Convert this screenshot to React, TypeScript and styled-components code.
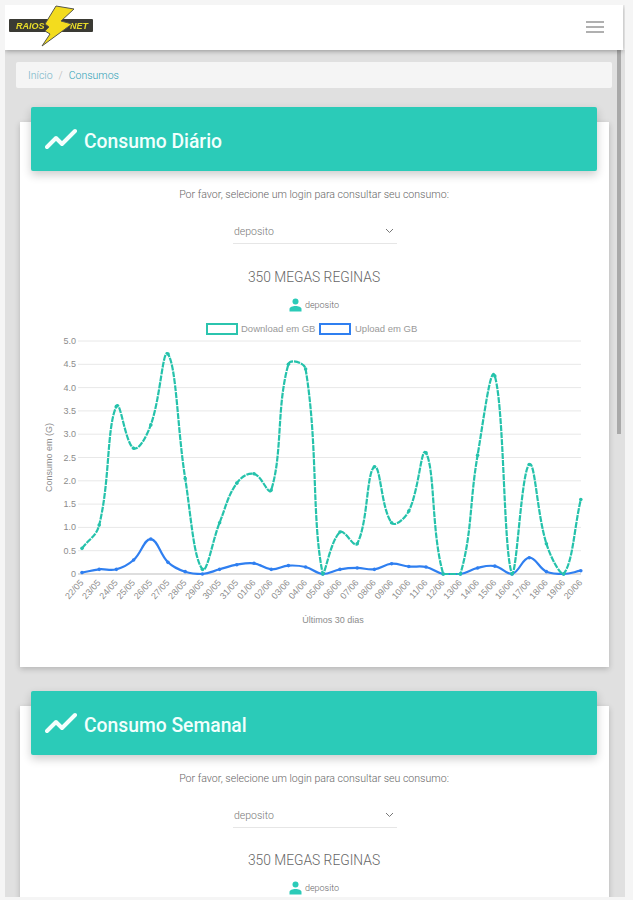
import styled, { createGlobalStyle } from "styled-components";

const GlobalStyle = createGlobalStyle`
  html, body {
    margin: 0;
    padding: 0;
    background: #f5f5f5;
    font-family: Roboto, "Liberation Sans", sans-serif;
  }
`;

const Frame = styled.div`
  position: relative;
  width: 620px;
  height: 892px;
  margin: 5px 0 0 5px;
  overflow: hidden;
  display: flex;
  flex-direction: column;
  filter: blur(0.7px);
`;

const Navbar = styled.header`
  position: relative;
  z-index: 2;
  flex: none;
  height: 45px;
  margin-right: 2px;
  background: #fff;
  box-shadow: 0 1px 5px rgba(0, 0, 0, 0.35);
  display: flex;
  align-items: center;
  justify-content: space-between;
  padding-right: 19px;
`;

const LogoLink = styled.a`
  display: flex;
  margin-top: -3px;
`;

const Burger = styled.div`
  width: 18px;
  display: flex;
  flex-direction: column;
  gap: 3px;
  margin-top: -1px;

  span {
    height: 2px;
    background: #b0b0b0;
  }
`;

const Scrollbar = styled.div`
  position: absolute;
  z-index: 1;
  right: 4px;
  top: 45px;
  width: 4px;
  height: 384px;
  background: #a9a9a9;
`;

const Main = styled.main`
  flex: 1;
  min-height: 0;
  padding: 12px 13px 0 11px;
  background: #e0e0e0;
  display: flex;
  flex-direction: column;
`;

const Breadcrumb = styled.nav`
  flex: none;
  height: 26px;
  border-radius: 2px;
  background: #f5f5f5;
  display: flex;
  align-items: center;
  gap: 6px;
  padding-left: 12px;
  font-size: 10.5px;
  font-weight: 300;
  color: #b5b5b5;
`;

const Crumb = styled.a<{ $active?: boolean }>`
  color: ${(p) => (p.$active ? "#2b9fb5" : "#6fb3c6")};
`;

const Card = styled.section<{ $first?: boolean }>`
  flex: none;
  margin: ${(p) => (p.$first ? "34px 3px 0 4px" : "39px 3px 0 4px")};
  height: ${(p) => (p.$first ? "545px" : "400px")};
  padding: 0 12px 0 11px;
  background: #fff;
  box-shadow: 0 2px 6px rgba(0, 0, 0, 0.2);
  display: flex;
  flex-direction: column;
  align-items: stretch;
`;

const CardHeader = styled.div`
  flex: none;
  height: 64px;
  margin-top: -15px;
  padding-left: 14px;
  border-radius: 2px;
  background: #2bcbb8;
  box-shadow: 0 4px 10px rgba(0, 0, 0, 0.2);
  display: flex;
  align-items: center;
  gap: 7px;
`;

const CardTitle = styled.h2`
  margin: 4px 0 0;
  font-size: 19.3px;
  font-weight: 500;
  color: #f2fffd;
`;

const Hint = styled.p`
  margin: 17px 0 0;
  height: 14px;
  line-height: 14px;
  text-align: center;
  font-size: 10.6px;
  font-weight: 300;
  color: #666;
`;

const SelectRow = styled.div`
  align-self: center;
  width: 164px;
  height: 25px;
  margin: 17px 0 0 2px;
  box-sizing: border-box;
  border-bottom: 1px solid #e6e6e6;
  padding: 0 3px 0 1px;
  display: flex;
  align-items: center;
  justify-content: space-between;
  font-size: 10.5px;
  font-weight: 300;
  color: #777;
`;

const PlanName = styled.h4<{ $first?: boolean }>`
  margin: ${(p) => (p.$first ? "25px" : "24px")} 0 0;
  height: 17px;
  line-height: 17px;
  text-align: center;
  font-size: 13.8px;
  font-weight: 300;
  color: #666;
`;

const LoginRow = styled.div`
  margin-top: 11px;
  height: 16px;
  display: flex;
  align-items: center;
  justify-content: center;
  gap: 3px;
  font-size: 9px;
  font-weight: 300;
  color: #666;
`;

const ChartArea = styled.svg`
  display: block;
  flex: none;
  margin: 10px -12px 0 -11px;
  width: 589px;
  height: 324px;
`;

const TickText = styled.text`
  font-family: "Liberation Sans", sans-serif;
  font-size: 9px;
  fill: #8c8c8c;
`;

const LegendText = styled.text`
  font-family: "Liberation Sans", sans-serif;
  font-size: 9.5px;
  fill: #999;
`;

const days = [
  "22/05", "23/05", "24/05", "25/05", "26/05", "27/05", "28/05", "29/05", "30/05", "31/05",
  "01/06", "02/06", "03/06", "04/06", "05/06", "06/06", "07/06", "08/06", "09/06", "10/06",
  "11/06", "12/06", "13/06", "14/06", "15/06", "16/06", "17/06", "18/06", "19/06", "20/06",
];

const download = [
  0.55, 1.05, 3.6, 2.7, 3.2, 4.72, 2.05, 0.1, 1.1, 1.95,
  2.15, 1.8, 4.5, 4.4, 0, 0.9, 0.65, 2.3, 1.1, 1.35,
  2.6, 0, 0, 2.55, 4.25, 0, 2.35, 0.65, 0, 1.6,
];

const upload = [
  0.03, 0.1, 0.1, 0.3, 0.75, 0.25, 0.05, 0, 0.1, 0.2,
  0.23, 0.1, 0.18, 0.15, 0, 0.1, 0.13, 0.1, 0.22, 0.16,
  0.15, 0, 0, 0.13, 0.17, 0, 0.35, 0.05, 0, 0.07,
];

const yTicks = [0, 0.5, 1, 1.5, 2, 2.5, 3, 3.5, 4, 4.5, 5];
const X = (i: number) => 62 + 17.2 * i;
const Y = (v: number) => 251 - v * 46.6;

// same bezier smoothing the chart lib uses (tension 0.4)
const curvePath = (values: number[]) => {
  const pts = values.map((v, i) => ({ x: X(i), y: Y(v) }));
  let d = `M${pts[0].x} ${pts[0].y}`;
  const ctrl = (i: number) => {
    const prev = pts[Math.max(i - 1, 0)];
    const cur = pts[i];
    const next = pts[Math.min(i + 1, pts.length - 1)];
    const d01 = Math.hypot(cur.x - prev.x, cur.y - prev.y);
    const d12 = Math.hypot(next.x - cur.x, next.y - cur.y);
    const total = d01 + d12 || 1;
    const fa = (0.4 * d01) / total;
    const fb = (0.4 * d12) / total;
    return {
      prev: { x: cur.x - fa * (next.x - prev.x), y: Math.min(Y(0), cur.y - fa * (next.y - prev.y)) },
      next: { x: cur.x + fb * (next.x - prev.x), y: Math.min(Y(0), cur.y + fb * (next.y - prev.y)) },
    };
  };
  for (let i = 1; i < pts.length; i++) {
    const a = ctrl(i - 1).next;
    const b = ctrl(i).prev;
    d += ` C${a.x.toFixed(1)} ${a.y.toFixed(1)} ${b.x.toFixed(1)} ${b.y.toFixed(1)} ${pts[i].x.toFixed(1)} ${pts[i].y.toFixed(1)}`;
  }
  return d;
};

const Series = ({ values, color, dash }: { values: number[]; color: string; dash?: string }) => (
  <g>
    <path d={curvePath(values)} fill="none" stroke={color} strokeWidth={2.2} strokeDasharray={dash} />
    {values.map((v, i) => (
      <circle key={i} cx={X(i)} cy={Y(v)} r={1.8} fill={color} />
    ))}
  </g>
);

const ConsumoChart = () => (
  <ChartArea viewBox="0 0 589 324">
    <rect x={187} y={1} width={30} height={10} fill="#fff" stroke="#2bc4ae" strokeWidth={2} />
    <LegendText x={221} y={9}>Download em GB</LegendText>
    <rect x={300} y={1} width={30} height={10} fill="#fff" stroke="#2f7ff0" strokeWidth={2} />
    <LegendText x={335} y={9}>Upload em GB</LegendText>

    {yTicks.map((t) => (
      <g key={t}>
        <line x1={58} x2={561} y1={Y(t)} y2={Y(t)} stroke={t === 0 ? "#bdbdbd" : "#e8e8e8"} />
        <TickText x={56} y={Y(t) + 3} textAnchor="end">{t === 0 ? "0" : t.toFixed(1)}</TickText>
      </g>
    ))}

    <TickText transform={`translate(32 ${Y(2.5)}) rotate(-90)`} textAnchor="middle">Consumo em (G)</TickText>

    {days.map((day, i) => (
      <TickText key={day} transform={`translate(${X(i) + 2} ${Y(0) + 9}) rotate(-48)`} textAnchor="end">
        {day}
      </TickText>
    ))}

    <TickText x={313} y={300} textAnchor="middle">Últimos 30 dias</TickText>

    <Series values={upload} color="#2f7ff0" />
    <Series values={download} color="#25c2ab" dash="6 1" />
  </ChartArea>
);

const TrendIcon = () => (
  <svg width="32" height="22" viewBox="0 0 32 22">
    <path d="M2 19 L11 10 L17 16 L30 3" fill="none" stroke="#f4fffd" strokeWidth="4" strokeLinecap="round" strokeLinejoin="round" />
  </svg>
);

const UserIcon = () => (
  <svg width="13" height="14" viewBox="0 0 13 14">
    <circle cx="6.5" cy="3.6" r="3" fill="#2bcbb8" />
    <path d="M0.5 13.5 V11 C0.5 9 3.5 8 6.5 8 C9.5 8 12.5 9 12.5 11 V13.5 Z" fill="#2bcbb8" />
  </svg>
);

const Chevron = () => (
  <svg width="9" height="6" viewBox="0 0 9 6">
    <path d="M1 1 L4.5 4.5 L8 1" fill="none" stroke="#777" strokeWidth="1" />
  </svg>
);

const Logo = () => (
  <svg width="90" height="42" viewBox="0 0 90 42">
    <rect x="4" y="14" width="84" height="13" rx="1" fill="#3a3a34" />
    <text x="11" y="23.8" fontFamily="'Liberation Sans', sans-serif" fontSize="9" fontStyle="italic" fontWeight="700" fill="#e8dc2a">RAIOS</text>
    <text x="65" y="23.8" fontFamily="'Liberation Sans', sans-serif" fontSize="9" fontStyle="italic" fontWeight="700" fill="#e8dc2a">NET</text>
    <polygon points="51,1 69,4 56,16 67,19 37,41 45,29 40,26 44,22 40,19" fill="#f3dc1e" stroke="#55554a" strokeWidth="1" />
  </svg>
);

const ConsumoCard = ({ title, first }: { title: string; first?: boolean }) => (
  <Card $first={first}>
    <CardHeader>
      <TrendIcon />
      <CardTitle>{title}</CardTitle>
    </CardHeader>
    <Hint>Por favor, selecione um login para consultar seu consumo:</Hint>
    <SelectRow>
      <span>deposito</span>
      <Chevron />
    </SelectRow>
    <PlanName $first={first}>350 MEGAS REGINAS</PlanName>
    <LoginRow>
      <UserIcon />
      <span>deposito</span>
    </LoginRow>
    {first && <ConsumoChart />}
  </Card>
);

export default function App() {
  return (
    <>
      <GlobalStyle />
      <Frame>
        <Navbar>
          <LogoLink>
            <Logo />
          </LogoLink>
          <Burger>
            <span />
            <span />
            <span />
          </Burger>
        </Navbar>
        <Scrollbar />
        <Main>
          <Breadcrumb>
            <Crumb>Início</Crumb>
            <span>/</span>
            <Crumb $active>Consumos</Crumb>
          </Breadcrumb>
          <ConsumoCard title="Consumo Diário" first />
          <ConsumoCard title="Consumo Semanal" />
        </Main>
      </Frame>
    </>
  );
}
